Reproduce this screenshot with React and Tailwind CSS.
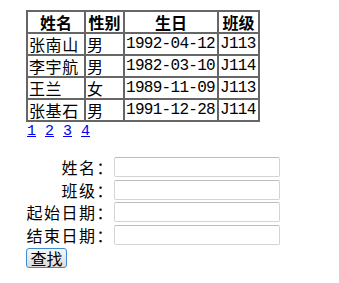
import React from 'react';

const students = [
  { name: '张南山', sex: '男', birth: '1992-04-12', cls: 'J113' },
  { name: '李宇航', sex: '男', birth: '1982-03-10', cls: 'J114' },
  { name: '王兰', sex: '女', birth: '1989-11-09', cls: 'J113' },
  { name: '张基石', sex: '男', birth: '1991-12-28', cls: 'J114' },
];

const cjk = "font-['Noto_Sans_CJK_SC',sans-serif]";
const mono = "font-['Liberation_Mono','Noto_Sans_CJK_SC',monospace]";

const fields = ['姓名：', '班级：', '起始日期：', '结束日期：'];

const cell = 'border border-[#666] py-0 leading-[20px] whitespace-nowrap';

export default function App() {
  return (
    <div className="min-h-screen bg-white text-black pl-[26px] pt-[10px]">
      <table className="w-[234px] table-fixed border border-[#666] border-separate border-spacing-0 text-[16px]">
        <colgroup>
          <col className="w-[58px]" />
          <col className="w-[39px]" />
          <col className="w-[94px]" />
          <col className="w-[41px]" />
        </colgroup>
        <thead>
          <tr className="h-[22px]">
            <th className={`${cell} p-0 font-bold ${cjk}`}>姓名</th>
            <th className={`${cell} p-0 font-bold ${cjk}`}>性别</th>
            <th className={`${cell} p-0 font-bold ${cjk}`}>生日</th>
            <th className={`${cell} p-0 font-bold ${cjk}`}>班级</th>
          </tr>
        </thead>
        <tbody>
          {students.map((s) => (
            <tr key={s.name} className="h-[22px]">
              <td className={`${cell} px-[1px] text-[16px] tracking-[0.6px] ${cjk}`}>{s.name}</td>
              <td className={`${cell} px-[1px] text-[16px] ${cjk}`}>{s.sex}</td>
              <td className={`${cell} px-[1px] text-[16px] tracking-[-0.7px] ${mono}`}>{s.birth}</td>
              <td className={`${cell} px-[1px] text-[16px] tracking-[-0.7px] ${mono}`}>{s.cls}</td>
            </tr>
          ))}
        </tbody>
      </table>

      <div className={`flex gap-[9px] pt-[2px] text-[15px] leading-[16px] pl-[1px] ${mono}`}>
        {[1, 2, 3, 4].map((n) => (
          <a key={n} href="#" className="text-[#0000ee] underline">{n}</a>
        ))}
      </div>

      <div className={`mt-[17px] -ml-[3px] grid grid-cols-[91px_166px] gap-y-[2.5px] text-[16px] ${cjk}`}>
        {fields.map((f) => (
          <React.Fragment key={f}>
            <label className="text-right leading-[20px] whitespace-nowrap tracking-[1.5px]">{f}</label>
            <input
              type="text"
              className="h-[20px] border border-[#d4d4d4] border-t-[#bdbdbd] rounded-[2px] bg-white outline-none"
            />
          </React.Fragment>
        ))}
      </div>

      <button
        className={`mt-[3px] h-[20px] w-[41px] border border-[#3c8ccf] rounded-[3px] bg-gradient-to-b from-[#f6f6f6] to-[#dcdcdc] text-[16px] leading-[16px] ${cjk}`}
      >
        查找
      </button>
    </div>
  );
}
